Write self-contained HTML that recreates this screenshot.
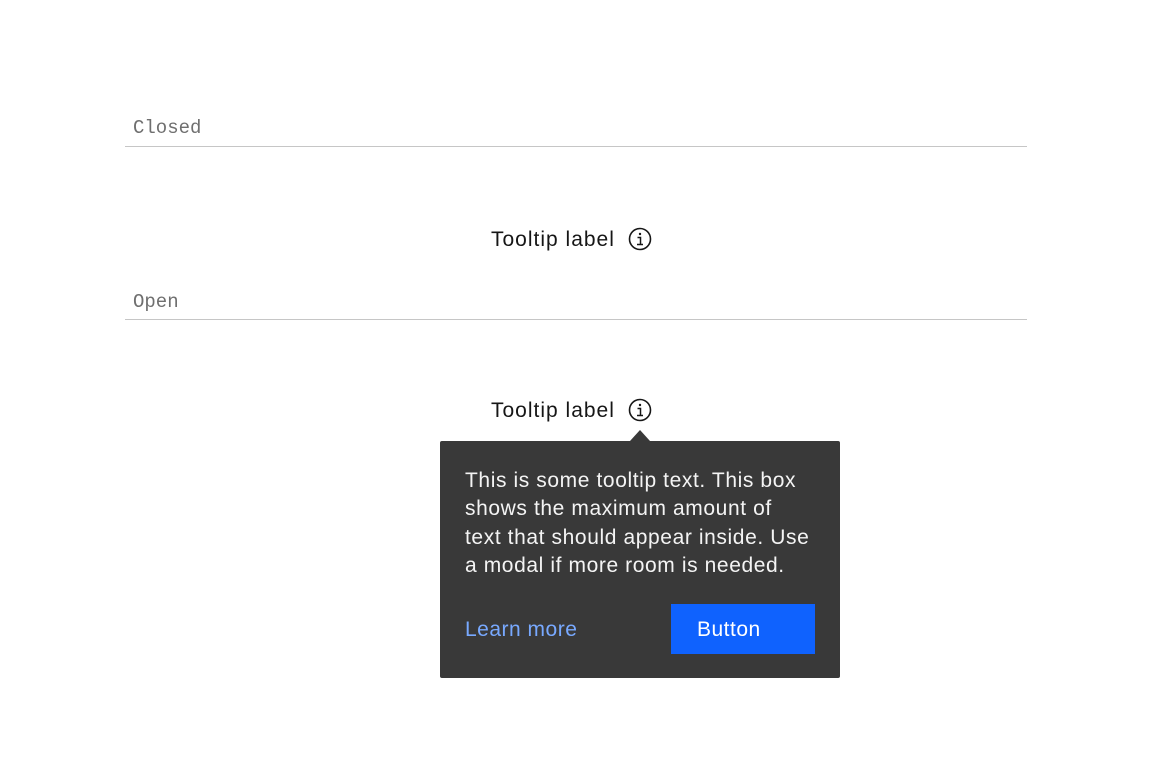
<!DOCTYPE html>
<html><head><style>
body{margin:0;width:1152px;height:776px;background:#fff;position:relative;font-family:"Liberation Sans",sans-serif;overflow:hidden}
.mono{position:absolute;left:133px;font-family:"Liberation Mono",monospace;font-size:19px;color:#6f6f6f}
.line{position:absolute;left:125px;width:902px;height:1px;background:#c6c6c6}
.lbl{position:absolute;left:491px;font-size:21px;letter-spacing:1px;color:#161616}
.ic{position:absolute;left:628px}
.tip{position:absolute;left:440px;top:441px;width:400px;height:237px;background:#393939;border-radius:2px}
.caret{position:absolute;left:630px;top:430px;width:0;height:0;border-left:10px solid transparent;border-right:10px solid transparent;border-bottom:11px solid #393939}
.txt{position:absolute;left:465px;top:467px;width:380px;font-size:21px;line-height:28.3px;color:#f4f4f4;white-space:nowrap;letter-spacing:0.6px}
.lm{position:absolute;left:465px;top:618px;font-size:21px;letter-spacing:0.5px;color:#78a9ff}
.btn{position:absolute;left:671px;top:604px;width:144px;height:50px;background:#0f62fe;color:#fff;font-size:21px;letter-spacing:0.5px;box-sizing:border-box;padding:14px 0 0 26px}
</style></head><body>
<div class="mono" style="top:117px">Closed</div>
<div class="line" style="top:146px"></div>
<div class="lbl" style="top:228px">Tooltip label</div>
<svg class="ic" style="top:227px" width="24" height="24" viewBox="0 0 24 24"><circle cx="12" cy="12" r="10.5" fill="none" stroke="#161616" stroke-width="1.6"/><circle cx="12" cy="7" r="1.2" fill="#161616"/><path d="M9.5 10.5h3v7M9 17.5h6" fill="none" stroke="#161616" stroke-width="1.5"/></svg>
<div class="mono" style="top:291px">Open</div>
<div class="line" style="top:319px"></div>
<div class="lbl" style="top:399px">Tooltip label</div>
<svg class="ic" style="top:398px" width="24" height="24" viewBox="0 0 24 24"><circle cx="12" cy="12" r="10.5" fill="none" stroke="#161616" stroke-width="1.6"/><circle cx="12" cy="7" r="1.2" fill="#161616"/><path d="M9.5 10.5h3v7M9 17.5h6" fill="none" stroke="#161616" stroke-width="1.5"/></svg>
<div class="caret"></div>
<div class="tip"></div>
<div class="txt">This is some tooltip text. This box<br>shows the maximum amount of<br>text that should appear inside. Use<br>a modal if more room is needed.</div>
<div class="lm">Learn more</div>
<div class="btn">Button</div>
</body></html>
